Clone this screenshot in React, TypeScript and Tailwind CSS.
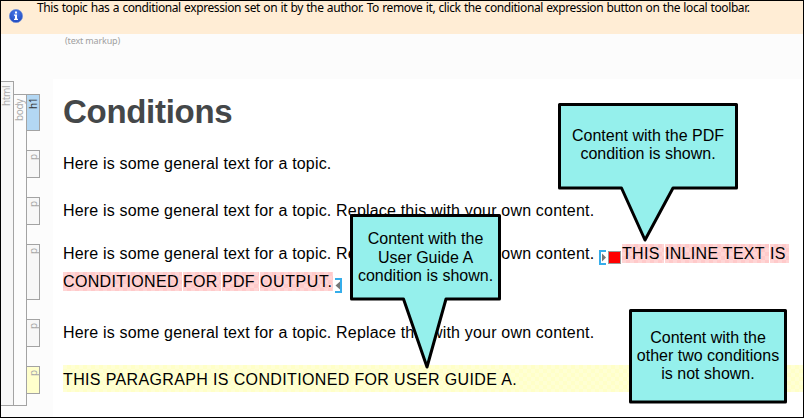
import type { ReactNode } from "react";

function Tag({ label, className }: { label: string; className: string }) {
  return (
    <div className={`box-border w-[14px] border border-[#a3a3a3] ${className}`}>
      <span className="block h-full w-full rotate-180 pb-[3px] text-right text-[10px] leading-[12px] [writing-mode:vertical-rl]">
        {label}
      </span>
    </div>
  );
}

function Callout({
  className,
  width,
  height,
  path,
  children,
}: {
  className: string;
  width: number;
  height: number;
  path: string;
  children: ReactNode;
}) {
  return (
    <div className={`absolute ${className}`}>
      <svg width={width} height={height} className="absolute top-0 left-0">
        <path d={path} fill="#95f0ec" stroke="#000" strokeWidth="3" strokeLinejoin="round" />
      </svg>
      {children}
    </div>
  );
}

function Line({ children, className }: { children: ReactNode; className: string }) {
  return (
    <div className={className}>
      <span>{children}</span>
    </div>
  );
}

function Mark({ children, className }: { children: ReactNode; className: string }) {
  return (
    <span
      className={`mt-[4px] block h-[19px] self-start bg-[#ffd0d0] bg-[repeating-conic-gradient(#ffcaca_0_25%,#ffd5d5_0_50%)] bg-[length:8px_8px] leading-[19px] ${className}`}
    >
      {children}
    </span>
  );
}

const general = "Here is some general text for a topic.";
const replace = " Replace this with your own content.";

export default function App() {
  return (
    <div className="relative flex h-[418px] w-[804px] flex-col overflow-hidden border border-black bg-[#fcfcfc] font-['Liberation_Sans',Arial,sans-serif] text-[16px] text-black">
      <header className="flex h-[33px] shrink-0 bg-[#ffedd5]">
        <svg width="14" height="14" viewBox="0 0 14 14" className="mt-[8px] ml-[8px]">
          <defs>
            <radialGradient id="blue" cx="50%" cy="30%" r="70%">
              <stop offset="0" stopColor="#4a7bea" />
              <stop offset="1" stopColor="#1f48bd" />
            </radialGradient>
          </defs>
          <circle cx="7" cy="7" r="6.6" fill="url(#blue)" stroke="#6f8fd8" strokeWidth=".7" />
          <path d="M6 2.5h2v2H6zM5 5.5h3v4.3h1V11H5V9.8h1V6.7H5z" fill="#fff" />
        </svg>
        <p className="ml-[14px] h-[14px] font-['Noto_Sans','Open_Sans',sans-serif] text-[12px] leading-[14px] tracking-[-0.405px] whitespace-nowrap [word-spacing:0.6px]">
          This topic has a conditional expression set on it by the author. To remove it, click the conditional expression button on the local toolbar.
        </p>
      </header>
      <div className="h-[45px] shrink-0 pt-[1px] pl-[64px] font-['Noto_Sans','Open_Sans',sans-serif] text-[9px] leading-[12px] tracking-[-0.15px] text-[#a0a0a0]">
        (text markup)
      </div>
      <main className="flex min-h-0 flex-1">
        <div className="flex h-[327px] w-[52px] shrink-0 pt-[2px] font-['Noto_Sans','Open_Sans',sans-serif] tracking-[-0.4px] text-[#aaa]">
          <div className="h-[325px] w-[13px] border-t border-r border-b border-[#a3a3a3] bg-[#f7f7f7]">
            <span className="block h-full w-full rotate-180 pb-[4px] text-right text-[10px] leading-[11px] [writing-mode:vertical-rl]">html</span>
          </div>
          <div className="mt-[13px] h-[312px] w-[13px] border-t border-r border-b border-[#a3a3a3] bg-[#fcfcfc]">
            <span className="block h-full w-full rotate-180 pb-[4px] text-right text-[10px] leading-[11px] [writing-mode:vertical-rl]">body</span>
          </div>
          <div className="-ml-px flex flex-col pt-[13px]">
            <Tag label="h1" className="h-[37px] bg-[#b3d7f3] text-[#333]" />
            <Tag label="p" className="mt-[19px] h-[28px] bg-[#f7f7f7]" />
            <Tag label="p" className="mt-[19px] h-[28px] bg-[#f7f7f7]" />
            <Tag label="p" className="mt-[19px] h-[56px] bg-[#f7f7f7]" />
            <Tag label="p" className="mt-[19px] h-[28px] bg-[#f7f7f7]" />
            <Tag label="p" className="mt-[19px] h-[28px] bg-[#ffffcc]" />
          </div>
        </div>
        <div className="min-w-0 flex-1 bg-white pl-[10px] tracking-[0.185px] whitespace-nowrap">
          <h1 className="h-[71px] pt-[14px] text-[33px] leading-[38px] font-bold tracking-[-0.3px] text-[#444749]">
            <span>Conditions</span>
          </h1>
          <Line className="h-[28px] leading-[28px]">{general}</Line>
          <Line className="mt-[19px] h-[28px] leading-[28px]">{general + replace}</Line>
          <div className="mt-[15px] flex h-[28px] items-center leading-[28px]">
            <span className="w-[536px]">{general + replace}</span>
            <svg width="23" height="15" className="mt-[7px]">
              <path d="M7 1H1v13h6" fill="none" stroke="#35adea" strokeWidth="2" />
              <path d="M3 3.500v8l4-4z" fill="#777" />
              <rect x="9.5" y="1.5" width="12" height="12" fill="#f00" stroke="#999" />
            </svg>
            <Mark className="w-[42px] tracking-[0.3px]">THIS</Mark>
            <Mark className="ml-px w-[104px] tracking-[0.3px]">INLINE TEXT</Mark>
            <Mark className="ml-px w-[19px] tracking-[0.3px]">IS</Mark>
          </div>
          <div className="flex h-[28px] items-center leading-[28px]">
            <Mark className="w-[119px] tracking-[0.35px]">CONDITIONED</Mark>
            <Mark className="ml-px w-[38px] tracking-[0.3px]">FOR</Mark>
            <Mark className="ml-px w-[37px] tracking-[0.3px]">PDF</Mark>
            <Mark className="ml-px w-[73px] tracking-[0.6px]">OUTPUT.</Mark>
            <svg width="8" height="15" className="mt-[6px] ml-[2px]">
              <path d="M0 1h6v13H0" fill="none" stroke="#35adea" strokeWidth="2" />
              <path d="M5 3.500v8L.5 7.500z" fill="#777" />
            </svg>
          </div>
          <Line className="mt-[23px] h-[28px] leading-[28px]">{general + replace}</Line>
          <Line className="mt-[18px] h-[27px] bg-[#ffffcc] bg-[repeating-conic-gradient(#ffffc8_0_25%,#ffffd4_0_50%)] bg-[length:8px_8px] leading-[29px] tracking-[0.36px]">
            THIS PARAGRAPH IS CONDITIONED FOR USER GUIDE A.
          </Line>
        </div>
      </main>
      <Callout
        className="top-[101px] left-[556px] h-[87px] w-[182px]"
        width={184}
        height={144}
        path="M2.5 2.5H179.5V86H116L88 138L64.500 86H2.5Z"
      >
        <p className="relative pt-[25px] text-center leading-[18px]">
          <span>Content with the PDF</span>
          <br />
          <span>condition is shown.</span>
        </p>
      </Callout>
      <Callout
        className="top-[212px] left-[348px] h-[88px] w-[153px]"
        width={155}
        height={164}
        path="M2.500 2.500H150.500V86H97L78 154L54.500 86H2.500Z"
      >
        <p className="relative pt-[17px] text-center leading-[18.5px]">
          <span>Content with the</span>
          <br />
          <span>User Guide A</span>
          <br />
          <span>condition is shown.</span>
        </p>
      </Callout>
      <Callout
        className="top-[307px] left-[627px] h-[97px] w-[160px]"
        width={162}
        height={98}
        path="M2.500 2.500H157.500V94H2.500Z"
      >
        <p className="relative pt-[21px] text-center leading-[18px]">
          <span>Content with the</span>
          <br />
          <span>other two conditions</span>
          <br />
          <span>is not shown.</span>
        </p>
      </Callout>
    </div>
  );
}
